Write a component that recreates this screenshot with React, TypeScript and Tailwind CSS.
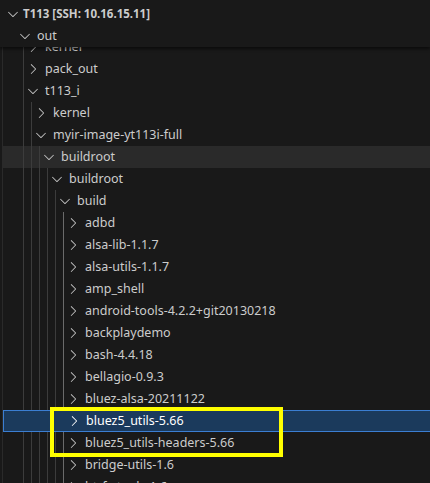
import React from "react";

type Row = { name: string; depth: number; kind: "open" | "closed"; hover?: boolean; selected?: boolean };

const rows: Row[] = [
  { name: "kernel", depth: 1, kind: "closed" },
  { name: "pack_out", depth: 1, kind: "closed" },
  { name: "t113_i", depth: 1, kind: "open" },
  { name: "kernel", depth: 2, kind: "closed" },
  { name: "myir-image-yt113i-full", depth: 2, kind: "open" },
  { name: "buildroot", depth: 3, kind: "open", hover: true },
  { name: "buildroot", depth: 4, kind: "open" },
  { name: "build", depth: 5, kind: "open" },
  { name: "adbd", depth: 6, kind: "closed" },
  { name: "alsa-lib-1.1.7", depth: 6, kind: "closed" },
  { name: "alsa-utils-1.1.7", depth: 6, kind: "closed" },
  { name: "amp_shell", depth: 6, kind: "closed" },
  { name: "android-tools-4.2.2+git20130218", depth: 6, kind: "closed" },
  { name: "backplaydemo", depth: 6, kind: "closed" },
  { name: "bash-4.4.18", depth: 6, kind: "closed" },
  { name: "bellagio-0.9.3", depth: 6, kind: "closed" },
  { name: "bluez-alsa-20211122", depth: 6, kind: "closed" },
  { name: "bluez5_utils-5.66", depth: 6, kind: "closed", selected: true },
  { name: "bluez5_utils-headers-5.66", depth: 6, kind: "closed" },
  { name: "bridge-utils-1.6", depth: 6, kind: "closed" },
  { name: "btrfs-tools-1.6", depth: 6, kind: "closed" },
];

const ChevronRight = ({ color = "#c5c5c5" }: { color?: string }) => (
  <svg width="16" height="16" viewBox="0 0 16 16" fill={color} className="shrink-0">
    <path d="M10.072 8.024L5.715 3.667l.618-.62L11 7.716v.618L6.333 13l-.618-.619 4.357-4.357z" />
  </svg>
);

const ChevronDown = ({ color = "#c5c5c5" }: { color?: string }) => (
  <svg width="16" height="16" viewBox="0 0 16 16" fill={color} className="shrink-0">
    <path d="M7.976 10.072l4.357-4.357.62.618L8.284 11h-.618L3 6.333l.619-.618 4.357 4.357z" />
  </svg>
);

const font = { fontFamily: '"Noto Sans", "Open Sans", sans-serif' };

function TreeRow({ r }: { r: Row }) {
  const guides = r.selected ? [] : Array.from({ length: r.depth }, (_, k) => 20 + 8 * k);
  const bg = r.selected
    ? "bg-[#1b3a5c] border-t border-b border-l border-[#3b7ed2] text-white"
    : r.hover
    ? "bg-[#2a2a2a] text-[#cccccc]"
    : "text-[#cccccc]";
  return (
    <div className={`relative ml-[3px] h-[22px] flex items-center gap-[4px] ${bg}`} style={{ paddingLeft: 14 + 8 * r.depth }}>
      {guides.map((g) => (
        <div
          key={g}
          className={`absolute top-0 bottom-0 w-px ${g === 60 ? "bg-[#6a6a6a]" : "bg-[#3c3c3c]"}`}
          style={{ left: g }}
        />
      ))}
      {r.kind === "open" ? <ChevronDown /> : <ChevronRight color={r.selected ? "#ffffff" : "#c5c5c5"} />}
      <span className="text-[12.5px] leading-[22px] whitespace-nowrap">{r.name}</span>
    </div>
  );
}

export default function App() {
  return (
    <div className="relative w-[430px] h-[483px] overflow-hidden bg-[#191919]" style={font}>
      <div className="absolute left-[2px] top-0 bottom-0 w-px bg-[#2a2a2a]" />
      <div className="pt-[36px] flex flex-col">
        {rows.map((r, i) => (
          <TreeRow key={i} r={r} />
        ))}
      </div>

      {/* sticky header overlay */}
      <div className="absolute left-0 top-0 w-full h-[47px] bg-[#191919] shadow-[0_2px_3px_rgba(0,0,0,0.55)] flex flex-col pt-[3px] text-[#cccccc]">
        <div className="h-[22px] flex items-center gap-[2px] pl-[5px]">
          <ChevronDown />
          <span className="text-[11.5px] font-bold leading-[22px] whitespace-nowrap">T113 [SSH: 10.16.15.11]</span>
        </div>
        <div className="h-[22px] flex items-center gap-[4px] pl-[17px]">
          <ChevronDown />
          <span className="text-[12.5px] leading-[22px]">out</span>
        </div>
      </div>

      {/* yellow annotation box */}
      <div className="absolute left-[50px] top-[407px] w-[233px] h-[50px] border-4 border-[#ffff00]" />
    </div>
  );
}
